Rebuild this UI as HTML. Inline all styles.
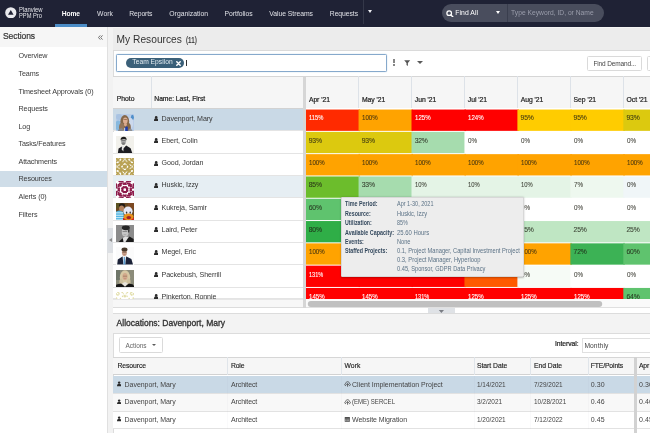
<!DOCTYPE html>
<html><head><meta charset="utf-8"><title>My Resources</title>
<style>
html,body{margin:0;padding:0;}
body{width:650px;height:433px;overflow:hidden;position:relative;background:#fff;font-family:"Liberation Sans",sans-serif;color:#333;}
.a{position:absolute;white-space:nowrap;}
.t{position:absolute;white-space:nowrap;line-height:10px;}
</style></head><body>
<div id="app" style="position:absolute;left:0;top:0;width:650px;height:433px;overflow:hidden;will-change:transform">

<div class="a" style="left:0.00px;top:0.00px;width:650.00px;height:26.80px;background:#1f2235;"></div>
<svg class="a" style="left:5px;top:6.7px" width="11.6" height="11.6" viewBox="0 0 11.6 11.6"><circle cx="5.8" cy="5.8" r="5.6" fill="#e9eaee"/><path d="M5.8 3 L8.6 7.8 L3 7.8 Z" fill="#1f2235"/></svg>
<div class="t" style="left:19.0px;top:5.00px;font-size:6.4px;color:#e4e5ea;transform:scaleX(0.921);transform-origin:0 0;">Planview</div>
<div class="t" style="left:19.0px;top:11.00px;font-size:6.4px;color:#e4e5ea;transform:scaleX(0.898);transform-origin:0 0;">PPM Pro</div>
<div class="t" style="left:61.8px;top:9.00px;font-size:6.7px;color:#fff;font-weight:bold;letter-spacing:-0.104px;">Home</div>
<div class="a" style="left:54.80px;top:24.20px;width:32.30px;height:2.60px;background:#4b8cc6;"></div>
<div class="t" style="left:97.1px;top:9.00px;font-size:6.8px;color:#dfe0e6;letter-spacing:-0.010px;">Work</div>
<div class="t" style="left:129.3px;top:9.00px;font-size:6.8px;color:#dfe0e6;letter-spacing:-0.116px;">Reports</div>
<div class="t" style="left:169.3px;top:9.00px;font-size:6.8px;color:#dfe0e6;letter-spacing:0.020px;">Organization</div>
<div class="t" style="left:224.6px;top:9.00px;font-size:6.8px;color:#dfe0e6;letter-spacing:-0.025px;">Portfolios</div>
<div class="t" style="left:269.2px;top:9.00px;font-size:6.8px;color:#dfe0e6;letter-spacing:-0.023px;">Value Streams</div>
<div class="t" style="left:329.8px;top:9.00px;font-size:6.8px;color:#dfe0e6;letter-spacing:-0.066px;">Requests</div>
<div class="a" style="left:362.60px;top:0.00px;width:0.80px;height:24.00px;background:#343849;"></div>
<div class="a" style="left:367.70px;top:10.40px;width:0;height:0;border-left:2.75px solid transparent;border-right:2.75px solid transparent;border-top:3.20px solid #eeeff3"></div>
<div class="a" style="left:442.10px;top:3.60px;width:162.20px;height:18.20px;background:#494d5d;border-radius:9.1px"></div>
<div class="a" style="left:507.10px;top:3.60px;width:0.80px;height:18.20px;background:#3a3e4e;"></div>
<svg class="a" style="left:446.2px;top:9.5px" width="7.7" height="7.7" viewBox="0 0 7 7"><circle cx="2.9" cy="2.9" r="2.1" fill="none" stroke="#fff" stroke-width="1.15"/><path d="M4.5 4.5 L6.3 6.3" stroke="#fff" stroke-width="1.3" stroke-linecap="round"/></svg>
<div class="t" style="left:455.3px;top:8.00px;font-size:6.8px;color:#fff;letter-spacing:0.063px;">Find All</div>
<div class="a" style="left:495.60px;top:10.60px;width:0;height:0;border-left:2.90px solid transparent;border-right:2.90px solid transparent;border-top:3.20px solid #fff"></div>
<div class="t" style="left:511.1px;top:8.00px;font-size:6.7px;color:#9a9dab;letter-spacing:0.016px;">Type Keyword, ID, or Name</div>
<div class="a" style="left:0.00px;top:26.80px;width:107.40px;height:20.40px;background:#f6f6f6;"></div>
<div class="t" style="left:3.0px;top:31.00px;font-size:8.5px;color:#333;letter-spacing:-0.075px;-webkit-text-stroke:0.2px #333;">Sections</div>
<svg class="a" style="left:97.6px;top:34.5px" width="5" height="5" viewBox="0 0 5 5"><path d="M2.3 0.4 L0.5 2.5 L2.3 4.6 M4.5 0.4 L2.7 2.5 L4.5 4.6" stroke="#6a6a6a" stroke-width="0.95" fill="none"/></svg>
<div class="a" style="left:0.00px;top:170.60px;width:107.50px;height:16.60px;background:#cfdde8;"></div>
<div class="t" style="left:18.5px;top:51.00px;font-size:7.2px;color:#3a3a3a;letter-spacing:-0.131px;">Overview</div>
<div class="t" style="left:18.5px;top:69.00px;font-size:7.2px;color:#3a3a3a;letter-spacing:-0.148px;">Teams</div>
<div class="t" style="left:18.5px;top:87.00px;font-size:7.2px;color:#3a3a3a;letter-spacing:-0.118px;">Timesheet Approvals (0)</div>
<div class="t" style="left:18.5px;top:104.00px;font-size:7.2px;color:#3a3a3a;letter-spacing:-0.133px;">Requests</div>
<div class="t" style="left:18.5px;top:122.00px;font-size:7.2px;color:#3a3a3a;letter-spacing:-0.140px;">Log</div>
<div class="t" style="left:18.5px;top:139.00px;font-size:7.2px;color:#3a3a3a;letter-spacing:-0.122px;">Tasks/Features</div>
<div class="t" style="left:18.5px;top:157.00px;font-size:7.2px;color:#3a3a3a;letter-spacing:-0.127px;">Attachments</div>
<div class="t" style="left:18.5px;top:174.00px;font-size:7.2px;color:#3a3a3a;letter-spacing:-0.134px;">Resources</div>
<div class="t" style="left:18.5px;top:192.00px;font-size:7.2px;color:#3a3a3a;letter-spacing:-0.102px;">Alerts (0)</div>
<div class="t" style="left:18.5px;top:210.00px;font-size:7.2px;color:#3a3a3a;letter-spacing:-0.098px;">Filters</div>
<div class="a" style="left:107.40px;top:26.80px;width:5.80px;height:407.00px;background:#f2f2f2;"></div>
<div class="a" style="left:107.20px;top:26.80px;width:0.60px;height:407.00px;background:#e0e0e0;"></div>
<div class="a" style="left:113.00px;top:26.80px;width:0.60px;height:407.00px;background:#dcdcdc;"></div>
<div class="a" style="left:107.40px;top:227.70px;width:5.90px;height:25.00px;background:#dcdfe3;"></div>
<div class="a" style="left:108.8px;top:237.5px;width:0;height:0;border-top:2.9px solid transparent;border-bottom:2.9px solid transparent;border-right:3px solid #8c8c8c"></div>
<div class="a" style="left:113.20px;top:26.80px;width:537.00px;height:23.60px;background:#ececec;"></div>
<div class="a" style="left:113.20px;top:26.80px;width:537.00px;height:1.20px;background:#f4f4f4;"></div>
<div class="t" style="left:116.6px;top:35.00px;font-size:10.2px;color:#333;letter-spacing:0.018px;">My Resources</div>
<div class="t" style="left:185.7px;top:36.00px;font-size:8.2px;color:#333;transform:scaleX(0.773);transform-origin:0 0;-webkit-text-stroke:0.2px #333;">(11)</div>
<div class="a" style="left:113.20px;top:50.20px;width:537.00px;height:0.70px;background:#dadada;"></div>
<div class="a" style="left:115.5px;top:54.3px;width:271px;height:17.3px;border:0.9px solid #86a9cc;border-radius:1.5px;box-sizing:border-box;background:#fff;box-shadow:0 0 1.2px #a9c3dc"></div>
<div class="a" style="left:126.20px;top:57.80px;width:58.00px;height:10.00px;background:#3b6079;border-radius:5px"></div>
<div class="t" style="left:132.3px;top:57.00px;font-size:6.7px;color:#e3ebf0;letter-spacing:0.023px;">Team Epsilon</div>
<svg class="a" style="left:175.8px;top:60.7px" width="5" height="5" viewBox="0 0 5 5"><path d="M0.8 0.8 L4.2 4.2 M4.2 0.8 L0.8 4.2" stroke="#fff" stroke-width="1.5" stroke-linecap="round"/></svg>
<div class="a" style="left:186.00px;top:60.00px;width:0.70px;height:6.40px;background:#333;"></div>
<div class="a" style="left:392.50px;top:58.70px;width:2.00px;height:2.10px;background:#5e5e5e;border-radius:1px"></div>
<div class="a" style="left:392.50px;top:61.20px;width:2.00px;height:2.10px;background:#5e5e5e;border-radius:1px"></div>
<div class="a" style="left:392.50px;top:63.70px;width:2.00px;height:2.10px;background:#5e5e5e;border-radius:1px"></div>
<svg class="a" style="left:404.4px;top:60px" width="6.4" height="6" viewBox="0 0 6.4 6"><path d="M0.2 0.3 H6.2 L3.9 2.9 V5.9 L2.5 5 V2.9 Z" fill="#555"/></svg>
<div class="a" style="left:416.50px;top:61.00px;width:0;height:0;border-left:3.00px solid transparent;border-right:3.00px solid transparent;border-top:3.30px solid #5a5a5a"></div>
<div class="a" style="left:587.3px;top:55.6px;width:54.4px;height:15px;border:0.7px solid #dadada;border-radius:1.5px;box-sizing:border-box;background:#fff"></div>
<div class="t" style="left:593.4px;top:59.00px;font-size:6.5px;color:#444;letter-spacing:-0.131px;">Find Demand...</div>
<div class="a" style="left:647.4px;top:55.6px;width:10px;height:15px;border:0.7px solid #dadada;border-radius:1.5px;box-sizing:border-box;background:#fff"></div>
<div class="a" style="left:113.20px;top:75.80px;width:537.00px;height:32.90px;background:#f6f6f6;border-top:0.7px solid #d6d6d6;border-bottom:0.7px solid #d2d2d2;box-sizing:border-box"></div>
<div class="a" style="left:151.40px;top:76.30px;width:0.70px;height:32.00px;background:#dde2e8;"></div>
<div class="t" style="left:116.8px;top:94.00px;font-size:6.8px;color:#222;letter-spacing:-0.034px;-webkit-text-stroke:0.2px #222;">Photo</div>
<div class="t" style="left:154.3px;top:94.00px;font-size:6.8px;color:#222;letter-spacing:-0.057px;-webkit-text-stroke:0.2px #222;">Name: Last, First</div>
<div class="t" style="left:308.9px;top:95.00px;font-size:6.8px;color:#222;letter-spacing:-0.046px;-webkit-text-stroke:0.2px #222;">Apr &#39;21</div>
<div class="t" style="left:361.9px;top:95.00px;font-size:6.8px;color:#222;letter-spacing:-0.051px;-webkit-text-stroke:0.2px #222;">May &#39;21</div>
<div class="a" style="left:358.15px;top:76.30px;width:0.70px;height:32.00px;background:#dde2e8;"></div>
<div class="t" style="left:414.8px;top:95.00px;font-size:6.8px;color:#222;letter-spacing:-0.047px;-webkit-text-stroke:0.2px #222;">Jun &#39;21</div>
<div class="a" style="left:411.10px;top:76.30px;width:0.70px;height:32.00px;background:#dde2e8;"></div>
<div class="t" style="left:467.8px;top:95.00px;font-size:6.8px;color:#222;letter-spacing:-0.042px;-webkit-text-stroke:0.2px #222;">Jul &#39;21</div>
<div class="a" style="left:464.05px;top:76.30px;width:0.70px;height:32.00px;background:#dde2e8;"></div>
<div class="t" style="left:520.7px;top:95.00px;font-size:6.8px;color:#222;letter-spacing:-0.049px;-webkit-text-stroke:0.2px #222;">Aug &#39;21</div>
<div class="a" style="left:517.00px;top:76.30px;width:0.70px;height:32.00px;background:#dde2e8;"></div>
<div class="t" style="left:573.6px;top:95.00px;font-size:6.8px;color:#222;letter-spacing:-0.049px;-webkit-text-stroke:0.2px #222;">Sep &#39;21</div>
<div class="a" style="left:569.95px;top:76.30px;width:0.70px;height:32.00px;background:#dde2e8;"></div>
<div class="t" style="left:626.6px;top:95.00px;font-size:6.8px;color:#222;letter-spacing:-0.046px;-webkit-text-stroke:0.2px #222;">Oct &#39;21</div>
<div class="a" style="left:622.90px;top:76.30px;width:0.70px;height:32.00px;background:#dde2e8;"></div>
<div class="a" style="left:113.20px;top:109.20px;width:190.20px;height:22.30px;background:#c9d9e6;border-bottom:0.6px solid #e4e4e4;box-sizing:border-box"></div>
<svg class="a" style="left:154px;top:115.9px" width="4.4" height="5" viewBox="0 0 9 10"><circle cx="4.5" cy="2.7" r="2.7" fill="#2b2b2b"/><path d="M0 10 C0 5.6 1.6 4.6 4.5 4.6 C7.4 4.6 9 5.6 9 10 Z" fill="#2b2b2b"/></svg>
<div class="t" style="left:161.6px;top:114.00px;font-size:7.1px;color:#383838;letter-spacing:-0.105px;">Davenport, Mary</div>
<div class="a" style="left:113.20px;top:131.50px;width:190.20px;height:22.30px;background:#fff;border-bottom:0.6px solid #e4e4e4;box-sizing:border-box"></div>
<svg class="a" style="left:154px;top:138.2px" width="4.4" height="5" viewBox="0 0 9 10"><circle cx="4.5" cy="2.7" r="2.7" fill="#2b2b2b"/><path d="M0 10 C0 5.6 1.6 4.6 4.5 4.6 C7.4 4.6 9 5.6 9 10 Z" fill="#2b2b2b"/></svg>
<div class="t" style="left:161.6px;top:136.00px;font-size:7.1px;color:#383838;letter-spacing:-0.093px;">Ebert, Colin</div>
<div class="a" style="left:113.20px;top:153.80px;width:190.20px;height:22.30px;background:#fff;border-bottom:0.6px solid #e4e4e4;box-sizing:border-box"></div>
<svg class="a" style="left:154px;top:160.5px" width="4.4" height="5" viewBox="0 0 9 10"><circle cx="4.5" cy="2.7" r="2.7" fill="#2b2b2b"/><path d="M0 10 C0 5.6 1.6 4.6 4.5 4.6 C7.4 4.6 9 5.6 9 10 Z" fill="#2b2b2b"/></svg>
<div class="t" style="left:161.6px;top:158.00px;font-size:7.1px;color:#383838;letter-spacing:-0.108px;">Good, Jordan</div>
<div class="a" style="left:113.20px;top:176.10px;width:190.20px;height:22.30px;background:#e6eef3;border-bottom:0.6px solid #e4e4e4;box-sizing:border-box"></div>
<svg class="a" style="left:154px;top:182.8px" width="4.4" height="5" viewBox="0 0 9 10"><circle cx="4.5" cy="2.7" r="2.7" fill="#2b2b2b"/><path d="M0 10 C0 5.6 1.6 4.6 4.5 4.6 C7.4 4.6 9 5.6 9 10 Z" fill="#2b2b2b"/></svg>
<div class="t" style="left:161.6px;top:180.00px;font-size:7.1px;color:#383838;letter-spacing:-0.095px;">Huskic, Izzy</div>
<div class="a" style="left:113.20px;top:198.40px;width:190.20px;height:22.30px;background:#fff;border-bottom:0.6px solid #e4e4e4;box-sizing:border-box"></div>
<svg class="a" style="left:154px;top:205.1px" width="4.4" height="5" viewBox="0 0 9 10"><circle cx="4.5" cy="2.7" r="2.7" fill="#2b2b2b"/><path d="M0 10 C0 5.6 1.6 4.6 4.5 4.6 C7.4 4.6 9 5.6 9 10 Z" fill="#2b2b2b"/></svg>
<div class="t" style="left:161.6px;top:203.00px;font-size:7.1px;color:#383838;letter-spacing:-0.100px;">Kukreja, Samir</div>
<div class="a" style="left:113.20px;top:220.70px;width:190.20px;height:22.30px;background:#fff;border-bottom:0.6px solid #e4e4e4;box-sizing:border-box"></div>
<svg class="a" style="left:154px;top:227.4px" width="4.4" height="5" viewBox="0 0 9 10"><circle cx="4.5" cy="2.7" r="2.7" fill="#2b2b2b"/><path d="M0 10 C0 5.6 1.6 4.6 4.5 4.6 C7.4 4.6 9 5.6 9 10 Z" fill="#2b2b2b"/></svg>
<div class="t" style="left:161.6px;top:225.00px;font-size:7.1px;color:#383838;letter-spacing:-0.092px;">Laird, Peter</div>
<div class="a" style="left:113.20px;top:243.00px;width:190.20px;height:22.30px;background:#fff;border-bottom:0.6px solid #e4e4e4;box-sizing:border-box"></div>
<svg class="a" style="left:154px;top:249.7px" width="4.4" height="5" viewBox="0 0 9 10"><circle cx="4.5" cy="2.7" r="2.7" fill="#2b2b2b"/><path d="M0 10 C0 5.6 1.6 4.6 4.5 4.6 C7.4 4.6 9 5.6 9 10 Z" fill="#2b2b2b"/></svg>
<div class="t" style="left:161.6px;top:247.00px;font-size:7.1px;color:#383838;letter-spacing:-0.097px;">Megel, Eric</div>
<div class="a" style="left:113.20px;top:265.30px;width:190.20px;height:22.30px;background:#fff;border-bottom:0.6px solid #e4e4e4;box-sizing:border-box"></div>
<svg class="a" style="left:154px;top:272.0px" width="4.4" height="5" viewBox="0 0 9 10"><circle cx="4.5" cy="2.7" r="2.7" fill="#2b2b2b"/><path d="M0 10 C0 5.6 1.6 4.6 4.5 4.6 C7.4 4.6 9 5.6 9 10 Z" fill="#2b2b2b"/></svg>
<div class="t" style="left:161.6px;top:270.00px;font-size:7.1px;color:#383838;letter-spacing:-0.097px;">Packebush, Sherrill</div>
<div class="a" style="left:113.20px;top:287.60px;width:190.20px;height:11.20px;background:#fff;border-bottom:0.6px solid #e4e4e4;box-sizing:border-box"></div>
<svg class="a" style="left:154px;top:294.3px" width="4.4" height="5" viewBox="0 0 9 10"><circle cx="4.5" cy="2.7" r="2.7" fill="#2b2b2b"/><path d="M0 10 C0 5.6 1.6 4.6 4.5 4.6 C7.4 4.6 9 5.6 9 10 Z" fill="#2b2b2b"/></svg>
<div class="t" style="left:161.6px;top:292.00px;font-size:7.1px;color:#383838;letter-spacing:-0.100px;">Pinkerton, Ronnie</div>
<svg class="a" style="left:116.3px;top:113.6px" width="17.6" height="17.3" viewBox="0 0 17.6 17.3"><defs><filter id="p1" x="-20%" y="-20%" width="140%" height="140%"><feGaussianBlur stdDeviation="0.7"/></filter></defs><g filter="url(#p1)"><rect x="-2" y="-2" width="22" height="22" fill="#b9cde8"/><ellipse cx="2.2" cy="11.5" rx="2.8" ry="5" fill="#86b8de"/><ellipse cx="16.4" cy="3.4" rx="1.5" ry="2.6" fill="#4f8fca"/><ellipse cx="14.6" cy="9" rx="2.6" ry="5" fill="#ccd9ec"/><ellipse cx="3" cy="3" rx="3" ry="3" fill="#a9c3e2"/><ellipse cx="8.8" cy="7.5" rx="4.4" ry="6.5" fill="#85674a"/><ellipse cx="5.6" cy="13.5" rx="2.6" ry="4.5" fill="#94765a"/><ellipse cx="12.4" cy="13.5" rx="2.4" ry="4.5" fill="#85674a"/><ellipse cx="9.3" cy="6.6" rx="2.3" ry="3.2" fill="#dcae92"/><ellipse cx="9.3" cy="5.6" rx="2.2" ry="0.5" fill="#9a7458"/><path d="M1.5 17.6 L3 15 L6 14 L8 17.6 Z" fill="#86888c"/><path d="M12 17.6 L13 14.4 L16 15.4 L16.6 17.6 Z" fill="#8e9094"/><rect x="9.2" y="12.6" width="2.6" height="5.2" fill="#1c3ba8"/><ellipse cx="9.4" cy="10.6" rx="1.5" ry="1.8" fill="#d8a88a"/></g></svg>
<svg class="a" style="left:116.3px;top:135.9px" width="17.6" height="17.3" viewBox="0 0 17.6 17.3"><defs><filter id="p2" x="-20%" y="-20%" width="140%" height="140%"><feGaussianBlur stdDeviation="0.7"/></filter></defs><g filter="url(#p2)"><rect x="-2" y="-2" width="22" height="22" fill="#f2f1ec"/><ellipse cx="7.5" cy="5.2" rx="2.6" ry="3.5" fill="#b0b0b0"/><path d="M4.6 4.4 C4.4 1.6 6 0.8 7.8 0.8 C9.8 0.8 10.9 2 10.5 4.6 C9.8 3.4 8.6 3 7.4 3.1 C6.2 3.2 5.2 3.6 4.6 4.4 Z" fill="#1c1c1c"/><rect x="5.4" y="4.4" width="4.2" height="0.7" fill="#5a5a5a"/><ellipse cx="7.4" cy="7.6" rx="1.7" ry="1.3" fill="#7c7c7c"/><path d="M1.8 17.6 L2.6 12.6 L6 10.4 L7.4 12.4 L10.2 9.6 L14.6 12.2 L16.4 17.6 Z" fill="#1a1a20"/><path d="M5.9 10.6 L7.7 9.6 L7.4 15.6 L5.8 13.6 Z" fill="#e4e4e4"/></g></svg>
<svg class="a" style="left:116.3px;top:158.2px" width="17.6" height="17.3" viewBox="0 0 17.6 17.3"><defs><filter id="p3" x="-20%" y="-20%" width="140%" height="140%"><feGaussianBlur stdDeviation="0.45"/></filter></defs><g filter="url(#p3)"><rect x="-2" y="-2" width="22" height="22" fill="#b9a254"/><circle cx="13.86" cy="6.47" r="0.48" fill="#ffffff"/><circle cx="6.59" cy="3.67" r="0.48" fill="#ffffff"/><circle cx="11.01" cy="13.63" r="0.48" fill="#ffffff"/><circle cx="3.74" cy="10.83" r="0.48" fill="#ffffff"/><circle cx="13.86" cy="10.83" r="0.48" fill="#ffffff"/><circle cx="11.01" cy="3.67" r="0.48" fill="#ffffff"/><circle cx="6.59" cy="13.63" r="0.48" fill="#ffffff"/><circle cx="3.74" cy="6.47" r="0.48" fill="#ffffff"/><circle cx="3.18" cy="2.93" r="0.37" fill="#ffffff"/><circle cx="3.18" cy="14.37" r="0.37" fill="#ffffff"/><circle cx="14.42" cy="2.93" r="0.37" fill="#ffffff"/><circle cx="14.62" cy="14.17" r="0.37" fill="#ffffff"/><circle cx="14.42" cy="14.37" r="0.37" fill="#ffffff"/><circle cx="14.62" cy="3.13" r="0.37" fill="#ffffff"/><circle cx="2.98" cy="14.17" r="0.37" fill="#ffffff"/><circle cx="2.98" cy="3.13" r="0.37" fill="#ffffff"/><circle cx="8.68" cy="0.99" r="0.44" fill="#ffffff"/><circle cx="16.59" cy="8.77" r="0.44" fill="#ffffff"/><circle cx="1.01" cy="8.77" r="0.44" fill="#ffffff"/><circle cx="8.92" cy="16.31" r="0.44" fill="#ffffff"/><circle cx="8.68" cy="16.31" r="0.44" fill="#ffffff"/><circle cx="8.92" cy="0.99" r="0.44" fill="#ffffff"/><circle cx="16.59" cy="8.53" r="0.44" fill="#ffffff"/><circle cx="1.01" cy="8.53" r="0.44" fill="#ffffff"/><circle cx="-0.46" cy="10.79" r="0.51" fill="#ffffff"/><circle cx="10.98" cy="-0.45" r="0.51" fill="#ffffff"/><circle cx="10.98" cy="17.75" r="0.51" fill="#ffffff"/><circle cx="6.62" cy="17.75" r="0.51" fill="#ffffff"/><circle cx="6.62" cy="-0.45" r="0.51" fill="#ffffff"/><circle cx="18.06" cy="6.51" r="0.51" fill="#ffffff"/><circle cx="-0.46" cy="6.51" r="0.51" fill="#ffffff"/><circle cx="18.06" cy="10.79" r="0.51" fill="#ffffff"/><circle cx="16.58" cy="4.3" r="0.57" fill="#ffffff"/><circle cx="16.58" cy="13.0" r="0.57" fill="#ffffff"/><circle cx="13.23" cy="16.3" r="0.57" fill="#ffffff"/><circle cx="4.37" cy="1.0" r="0.57" fill="#ffffff"/><circle cx="13.23" cy="1.0" r="0.57" fill="#ffffff"/><circle cx="4.37" cy="16.3" r="0.57" fill="#ffffff"/><circle cx="1.02" cy="4.3" r="0.57" fill="#ffffff"/><circle cx="1.02" cy="13.0" r="0.57" fill="#ffffff"/><circle cx="7.4" cy="14.45" r="0.65" fill="#ffffff"/><circle cx="14.7" cy="10.03" r="0.65" fill="#ffffff"/><circle cx="14.7" cy="7.27" r="0.65" fill="#ffffff"/><circle cx="2.9" cy="10.03" r="0.65" fill="#ffffff"/><circle cx="2.9" cy="7.27" r="0.65" fill="#ffffff"/><circle cx="10.2" cy="14.45" r="0.65" fill="#ffffff"/><circle cx="7.4" cy="2.85" r="0.65" fill="#ffffff"/><circle cx="10.2" cy="2.85" r="0.65" fill="#ffffff"/><circle cx="3.93" cy="15.43" r="0.58" fill="#ffffff"/><circle cx="1.91" cy="13.43" r="0.58" fill="#ffffff"/><circle cx="15.69" cy="3.87" r="0.58" fill="#ffffff"/><circle cx="1.91" cy="3.87" r="0.58" fill="#ffffff"/><circle cx="13.67" cy="15.43" r="0.58" fill="#ffffff"/><circle cx="3.93" cy="1.87" r="0.58" fill="#ffffff"/><circle cx="13.67" cy="1.87" r="0.58" fill="#ffffff"/><circle cx="15.69" cy="13.43" r="0.58" fill="#ffffff"/><circle cx="9.4" cy="1.72" r="0.56" fill="#ffffff"/><circle cx="8.2" cy="15.58" r="0.56" fill="#ffffff"/><circle cx="15.85" cy="8.06" r="0.56" fill="#ffffff"/><circle cx="1.75" cy="8.06" r="0.56" fill="#ffffff"/><circle cx="15.85" cy="9.24" r="0.56" fill="#ffffff"/><circle cx="1.75" cy="9.24" r="0.56" fill="#ffffff"/><circle cx="8.2" cy="1.72" r="0.56" fill="#ffffff"/><circle cx="9.4" cy="15.58" r="0.56" fill="#ffffff"/><circle cx="6.0" cy="8.37" r="0.65" fill="#ffffff"/><circle cx="11.6" cy="8.93" r="0.65" fill="#ffffff"/><circle cx="9.09" cy="5.9" r="0.65" fill="#ffffff"/><circle cx="9.09" cy="11.4" r="0.65" fill="#ffffff"/><circle cx="8.51" cy="5.9" r="0.65" fill="#ffffff"/><circle cx="11.6" cy="8.37" r="0.65" fill="#ffffff"/><circle cx="6.0" cy="8.93" r="0.65" fill="#ffffff"/><circle cx="8.51" cy="11.4" r="0.65" fill="#ffffff"/><circle cx="13.2" cy="15.22" r="0.66" fill="#ffffff"/><circle cx="13.2" cy="2.08" r="0.66" fill="#ffffff"/><circle cx="15.49" cy="12.97" r="0.66" fill="#ffffff"/><circle cx="2.11" cy="4.33" r="0.66" fill="#ffffff"/><circle cx="15.49" cy="4.33" r="0.66" fill="#ffffff"/><circle cx="4.4" cy="15.22" r="0.66" fill="#ffffff"/><circle cx="4.4" cy="2.08" r="0.66" fill="#ffffff"/><circle cx="2.11" cy="12.97" r="0.66" fill="#ffffff"/><circle cx="2.16" cy="0.23" r="0.49" fill="#ffffff"/><circle cx="15.44" cy="0.23" r="0.49" fill="#ffffff"/><circle cx="0.23" cy="15.18" r="0.49" fill="#ffffff"/><circle cx="2.16" cy="17.07" r="0.49" fill="#ffffff"/><circle cx="17.37" cy="15.18" r="0.49" fill="#ffffff"/><circle cx="15.44" cy="17.07" r="0.49" fill="#ffffff"/><circle cx="0.23" cy="2.12" r="0.49" fill="#ffffff"/><circle cx="17.37" cy="2.12" r="0.49" fill="#ffffff"/><circle cx="16.25" cy="12.71" r="0.68" fill="#ffffff"/><circle cx="16.25" cy="4.59" r="0.68" fill="#ffffff"/><circle cx="4.67" cy="15.97" r="0.68" fill="#ffffff"/><circle cx="1.35" cy="4.59" r="0.68" fill="#ffffff"/><circle cx="12.93" cy="15.97" r="0.68" fill="#ffffff"/><circle cx="1.35" cy="12.71" r="0.68" fill="#ffffff"/><circle cx="12.93" cy="1.33" r="0.68" fill="#ffffff"/><circle cx="4.67" cy="1.33" r="0.68" fill="#ffffff"/><circle cx="0.63" cy="9.54" r="0.4" fill="#ffffff"/><circle cx="7.89" cy="16.68" r="0.4" fill="#ffffff"/><circle cx="0.63" cy="7.76" r="0.4" fill="#ffffff"/><circle cx="7.89" cy="0.62" r="0.4" fill="#ffffff"/><circle cx="9.71" cy="0.62" r="0.4" fill="#ffffff"/><circle cx="16.97" cy="9.54" r="0.4" fill="#ffffff"/><circle cx="9.71" cy="16.68" r="0.4" fill="#ffffff"/><circle cx="16.97" cy="7.76" r="0.4" fill="#ffffff"/><circle cx="8.8" cy="8.65" r="2.6" fill="none" stroke="#fff" stroke-width="0.9" stroke-dasharray="1.6 0.9"/></g></svg>
<svg class="a" style="left:116.3px;top:180.5px" width="17.6" height="17.3" viewBox="0 0 17.6 17.3"><defs><filter id="p4" x="-20%" y="-20%" width="140%" height="140%"><feGaussianBlur stdDeviation="0.45"/></filter></defs><g filter="url(#p4)"><rect x="-2" y="-2" width="22" height="22" fill="#ffffff"/><circle cx="6.69" cy="-0.15" r="0.78" fill="#8c1a4a"/><circle cx="10.91" cy="-0.15" r="0.78" fill="#8c1a4a"/><circle cx="17.75" cy="10.72" r="0.78" fill="#8c1a4a"/><circle cx="-0.15" cy="6.58" r="0.78" fill="#8c1a4a"/><circle cx="-0.15" cy="10.72" r="0.78" fill="#8c1a4a"/><circle cx="17.75" cy="6.58" r="0.78" fill="#8c1a4a"/><circle cx="6.69" cy="17.45" r="0.78" fill="#8c1a4a"/><circle cx="10.91" cy="17.45" r="0.78" fill="#8c1a4a"/><circle cx="15.35" cy="9.43" r="0.85" fill="#8c1a4a"/><circle cx="9.59" cy="15.09" r="0.85" fill="#8c1a4a"/><circle cx="8.01" cy="2.21" r="0.85" fill="#8c1a4a"/><circle cx="2.25" cy="7.87" r="0.85" fill="#8c1a4a"/><circle cx="2.25" cy="9.43" r="0.85" fill="#8c1a4a"/><circle cx="9.59" cy="2.21" r="0.85" fill="#8c1a4a"/><circle cx="8.01" cy="15.09" r="0.85" fill="#8c1a4a"/><circle cx="15.35" cy="7.87" r="0.85" fill="#8c1a4a"/><circle cx="18.09" cy="6.74" r="1.09" fill="#8c1a4a"/><circle cx="6.85" cy="17.78" r="1.09" fill="#8c1a4a"/><circle cx="10.75" cy="-0.48" r="1.09" fill="#8c1a4a"/><circle cx="18.09" cy="10.56" r="1.09" fill="#8c1a4a"/><circle cx="6.85" cy="-0.48" r="1.09" fill="#8c1a4a"/><circle cx="-0.49" cy="6.74" r="1.09" fill="#8c1a4a"/><circle cx="10.75" cy="17.78" r="1.09" fill="#8c1a4a"/><circle cx="-0.49" cy="10.56" r="1.09" fill="#8c1a4a"/><circle cx="13.01" cy="12.85" r="1.0" fill="#8c1a4a"/><circle cx="4.53" cy="4.51" r="1.0" fill="#8c1a4a"/><circle cx="13.07" cy="4.51" r="1.0" fill="#8c1a4a"/><circle cx="4.53" cy="12.79" r="1.0" fill="#8c1a4a"/><circle cx="4.59" cy="4.45" r="1.0" fill="#8c1a4a"/><circle cx="13.07" cy="12.79" r="1.0" fill="#8c1a4a"/><circle cx="13.01" cy="4.45" r="1.0" fill="#8c1a4a"/><circle cx="4.59" cy="12.85" r="1.0" fill="#8c1a4a"/><circle cx="7.01" cy="1.06" r="0.75" fill="#8c1a4a"/><circle cx="1.08" cy="6.89" r="0.75" fill="#8c1a4a"/><circle cx="16.52" cy="6.89" r="0.75" fill="#8c1a4a"/><circle cx="10.59" cy="1.06" r="0.75" fill="#8c1a4a"/><circle cx="1.08" cy="10.41" r="0.75" fill="#8c1a4a"/><circle cx="16.52" cy="10.41" r="0.75" fill="#8c1a4a"/><circle cx="7.01" cy="16.24" r="0.75" fill="#8c1a4a"/><circle cx="10.59" cy="16.24" r="0.75" fill="#8c1a4a"/><circle cx="8.99" cy="6.51" r="0.86" fill="#8c1a4a"/><circle cx="8.61" cy="6.51" r="0.86" fill="#8c1a4a"/><circle cx="10.98" cy="8.83" r="0.86" fill="#8c1a4a"/><circle cx="8.99" cy="10.79" r="0.86" fill="#8c1a4a"/><circle cx="10.98" cy="8.47" r="0.86" fill="#8c1a4a"/><circle cx="8.61" cy="10.79" r="0.86" fill="#8c1a4a"/><circle cx="6.62" cy="8.47" r="0.86" fill="#8c1a4a"/><circle cx="6.62" cy="8.83" r="0.86" fill="#8c1a4a"/><circle cx="12.59" cy="0.4" r="0.93" fill="#8c1a4a"/><circle cx="17.19" cy="4.92" r="0.93" fill="#8c1a4a"/><circle cx="5.01" cy="0.4" r="0.93" fill="#8c1a4a"/><circle cx="0.41" cy="4.92" r="0.93" fill="#8c1a4a"/><circle cx="17.19" cy="12.38" r="0.93" fill="#8c1a4a"/><circle cx="0.41" cy="12.38" r="0.93" fill="#8c1a4a"/><circle cx="5.01" cy="16.9" r="0.93" fill="#8c1a4a"/><circle cx="12.59" cy="16.9" r="0.93" fill="#8c1a4a"/><circle cx="11.2" cy="9.69" r="1.29" fill="#8c1a4a"/><circle cx="11.2" cy="7.61" r="1.29" fill="#8c1a4a"/><circle cx="6.4" cy="7.61" r="1.29" fill="#8c1a4a"/><circle cx="9.86" cy="11.01" r="1.29" fill="#8c1a4a"/><circle cx="7.74" cy="6.29" r="1.29" fill="#8c1a4a"/><circle cx="6.4" cy="9.69" r="1.29" fill="#8c1a4a"/><circle cx="9.86" cy="6.29" r="1.29" fill="#8c1a4a"/><circle cx="7.74" cy="11.01" r="1.29" fill="#8c1a4a"/><circle cx="14.57" cy="8.07" r="0.93" fill="#8c1a4a"/><circle cx="8.21" cy="14.32" r="0.93" fill="#8c1a4a"/><circle cx="8.21" cy="2.98" r="0.93" fill="#8c1a4a"/><circle cx="3.03" cy="9.23" r="0.93" fill="#8c1a4a"/><circle cx="9.39" cy="14.32" r="0.93" fill="#8c1a4a"/><circle cx="9.39" cy="2.98" r="0.93" fill="#8c1a4a"/><circle cx="14.57" cy="9.23" r="0.93" fill="#8c1a4a"/><circle cx="3.03" cy="8.07" r="0.93" fill="#8c1a4a"/><circle cx="2.65" cy="11.74" r="1.11" fill="#8c1a4a"/><circle cx="11.95" cy="14.69" r="1.11" fill="#8c1a4a"/><circle cx="5.65" cy="2.61" r="1.11" fill="#8c1a4a"/><circle cx="14.95" cy="11.74" r="1.11" fill="#8c1a4a"/><circle cx="5.65" cy="14.69" r="1.11" fill="#8c1a4a"/><circle cx="2.65" cy="5.56" r="1.11" fill="#8c1a4a"/><circle cx="14.95" cy="5.56" r="1.11" fill="#8c1a4a"/><circle cx="11.95" cy="2.61" r="1.11" fill="#8c1a4a"/><circle cx="4.17" cy="14.59" r="1.24" fill="#8c1a4a"/><circle cx="13.43" cy="2.71" r="1.24" fill="#8c1a4a"/><circle cx="14.84" cy="4.1" r="1.24" fill="#8c1a4a"/><circle cx="4.17" cy="2.71" r="1.24" fill="#8c1a4a"/><circle cx="2.76" cy="13.2" r="1.24" fill="#8c1a4a"/><circle cx="14.84" cy="13.2" r="1.24" fill="#8c1a4a"/><circle cx="13.43" cy="14.59" r="1.24" fill="#8c1a4a"/><circle cx="2.76" cy="4.1" r="1.24" fill="#8c1a4a"/><circle cx="7.48" cy="13.97" r="0.74" fill="#8c1a4a"/><circle cx="14.21" cy="9.95" r="0.74" fill="#8c1a4a"/><circle cx="3.39" cy="7.35" r="0.74" fill="#8c1a4a"/><circle cx="3.39" cy="9.95" r="0.74" fill="#8c1a4a"/><circle cx="14.21" cy="7.35" r="0.74" fill="#8c1a4a"/><circle cx="10.12" cy="13.97" r="0.74" fill="#8c1a4a"/><circle cx="7.48" cy="3.33" r="0.74" fill="#8c1a4a"/><circle cx="10.12" cy="3.33" r="0.74" fill="#8c1a4a"/><circle cx="4.26" cy="0.0" r="0.82" fill="#8c1a4a"/><circle cx="13.34" cy="17.3" r="0.82" fill="#8c1a4a"/><circle cx="17.6" cy="4.18" r="0.82" fill="#8c1a4a"/><circle cx="0.0" cy="4.18" r="0.82" fill="#8c1a4a"/><circle cx="17.6" cy="13.12" r="0.82" fill="#8c1a4a"/><circle cx="13.34" cy="0.0" r="0.82" fill="#8c1a4a"/><circle cx="4.26" cy="17.3" r="0.82" fill="#8c1a4a"/><circle cx="0.0" cy="13.12" r="0.82" fill="#8c1a4a"/><circle cx="17.6" cy="13.94" r="1.14" fill="#8c1a4a"/><circle cx="17.6" cy="3.36" r="1.14" fill="#8c1a4a"/><circle cx="14.18" cy="17.3" r="1.14" fill="#8c1a4a"/><circle cx="3.42" cy="17.3" r="1.14" fill="#8c1a4a"/><circle cx="0.0" cy="13.94" r="1.14" fill="#8c1a4a"/><circle cx="3.42" cy="0.0" r="1.14" fill="#8c1a4a"/><circle cx="0.0" cy="3.36" r="1.14" fill="#8c1a4a"/><circle cx="14.18" cy="0.0" r="1.14" fill="#8c1a4a"/><circle cx="16.99" cy="6.04" r="0.91" fill="#8c1a4a"/><circle cx="6.14" cy="16.7" r="0.91" fill="#8c1a4a"/><circle cx="16.99" cy="11.26" r="0.91" fill="#8c1a4a"/><circle cx="0.61" cy="6.04" r="0.91" fill="#8c1a4a"/><circle cx="6.14" cy="0.6" r="0.91" fill="#8c1a4a"/><circle cx="0.61" cy="11.26" r="0.91" fill="#8c1a4a"/><circle cx="11.46" cy="0.6" r="0.91" fill="#8c1a4a"/><circle cx="11.46" cy="16.7" r="0.91" fill="#8c1a4a"/><circle cx="8.8" cy="8.65" r="1.2" fill="#fff"/></g></svg>
<svg class="a" style="left:116.3px;top:202.8px" width="17.6" height="17.3" viewBox="0 0 17.6 17.3"><defs><filter id="p5" x="-20%" y="-20%" width="140%" height="140%"><feGaussianBlur stdDeviation="0.7"/></filter></defs><g filter="url(#p5)"><rect x="-2" y="-2" width="22" height="22" fill="#6a4a22"/><rect x="-2" y="-2" width="8" height="7" fill="#5b5224"/><rect x="12" y="-2" width="8" height="8" fill="#7c4a24"/><ellipse cx="6" cy="2.4" rx="3" ry="2.2" fill="#241c18"/><ellipse cx="5.6" cy="5.6" rx="2.5" ry="3.1" fill="#b58462"/><path d="M-1 9 L3 7.4 L7.5 9 L8 18 L-1 18 Z" fill="#55b6e2"/><rect x="-1" y="9.4" width="8" height="0.9" fill="#d8f0fa"/><rect x="-1" y="11.8" width="8.5" height="0.9" fill="#d8f0fa"/><rect x="-1" y="14.2" width="8.5" height="0.9" fill="#d8f0fa"/><rect x="-1" y="16.4" width="8.5" height="0.8" fill="#d8f0fa"/><ellipse cx="12" cy="8.2" rx="4.6" ry="4.6" fill="#e6e8f6"/><ellipse cx="10.6" cy="9.6" rx="0.7" ry="1.2" fill="#333"/><ellipse cx="14.2" cy="9.6" rx="0.7" ry="1.2" fill="#333"/><rect x="7" y="15" width="12" height="3.5" fill="#cf2424"/><ellipse cx="12.6" cy="13.8" rx="5" ry="3.3" fill="#e8921e"/><ellipse cx="12.8" cy="14.6" rx="2.4" ry="1.6" fill="#a0222c"/></g></svg>
<svg class="a" style="left:116.3px;top:225.1px" width="17.6" height="17.3" viewBox="0 0 17.6 17.3"><defs><filter id="p6" x="-20%" y="-20%" width="140%" height="140%"><feGaussianBlur stdDeviation="0.7"/></filter></defs><g filter="url(#p6)"><rect x="-2" y="-2" width="22" height="22" fill="#8c8c8c"/><ellipse cx="9.2" cy="7" rx="3.4" ry="4.6" fill="#c6c6c6"/><ellipse cx="9.8" cy="2.8" rx="4" ry="2.4" fill="#262626"/><ellipse cx="12.7" cy="5.6" rx="0.8" ry="2.2" fill="#3a3a3a"/><rect x="6.6" y="6.3" width="4.6" height="0.7" fill="#6e6e6e"/><rect x="7.6" y="9.6" width="2.6" height="0.5" fill="#8a8a8a"/><path d="M2 17.6 L6.5 13.2 L9 15.5 L13.5 11.6 L17.6 14 L17.6 17.6 Z" fill="#1e1e1e"/><path d="M6.8 13 L9.4 11.4 L12.6 12 L9.2 17.6 L7.6 17.6 Z" fill="#e0e0e0"/></g></svg>
<svg class="a" style="left:116.3px;top:247.4px" width="17.6" height="17.3" viewBox="0 0 17.6 17.3"><defs><filter id="p7" x="-20%" y="-20%" width="140%" height="140%"><feGaussianBlur stdDeviation="0.7"/></filter></defs><g filter="url(#p7)"><rect x="-2" y="-2" width="22" height="22" fill="#fbfbfb"/><ellipse cx="8.4" cy="5.6" rx="2.5" ry="3.6" fill="#c9a089"/><ellipse cx="8.5" cy="2.6" rx="3" ry="2" fill="#47372a"/><rect x="6.4" y="5" width="4" height="0.6" fill="#7a5a48"/><rect x="7.4" y="7.4" width="2.2" height="0.5" fill="#a87868"/><path d="M1.2 17.6 L1.8 12.5 L6.4 9.6 L8.3 11 L10.4 9.4 L15.4 12 L17 17.6 Z" fill="#1c2438"/><path d="M6.6 9.8 L8.3 9 L10.2 9.6 L9.2 17.6 L7.4 17.6 Z" fill="#e8ecf0"/><path d="M7.8 10 L8.9 10 L9.4 17.6 L7.5 17.6 Z" fill="#5a9bd0"/></g></svg>
<svg class="a" style="left:116.3px;top:269.7px" width="17.6" height="17.3" viewBox="0 0 17.6 17.3"><defs><filter id="p8" x="-20%" y="-20%" width="140%" height="140%"><feGaussianBlur stdDeviation="0.7"/></filter></defs><g filter="url(#p8)"><rect x="-2" y="-2" width="22" height="22" fill="#8c8c7a"/><rect x="-2" y="-2" width="6" height="12" fill="#6e7468"/><ellipse cx="9" cy="7.5" rx="5.2" ry="7.2" fill="#d6c8a4"/><ellipse cx="9" cy="6.6" rx="2.6" ry="3.6" fill="#d2aa8c"/><rect x="7" y="5.8" width="4" height="0.6" fill="#8a6a50"/><rect x="7.8" y="8.4" width="2.4" height="0.6" fill="#c08878"/><ellipse cx="5.2" cy="12" rx="1.8" ry="3.6" fill="#cdbf9c"/><ellipse cx="12.8" cy="12" rx="1.8" ry="3.6" fill="#cdbf9c"/><path d="M-1 18 L0.5 14.6 L5 13.4 L9 16.5 L13 13.4 L17 14.4 L19 18 Z" fill="#161616"/><path d="M6 13.4 L9 12 L12 13.4 L9 16.8 Z" fill="#e8e4dc"/></g></svg>
<svg class="a" style="left:116.3px;top:292.0px" width="17.6" height="6.8" viewBox="0 0 17.6 6.8"><defs><filter id="p9" x="-20%" y="-20%" width="140%" height="140%"><feGaussianBlur stdDeviation="0.45"/></filter></defs><g filter="url(#p9)"><rect x="-2" y="-2" width="22" height="22" fill="#ffffff"/><circle cx="14.59" cy="15.43" r="0.9" fill="#e2deaa"/><circle cx="3.01" cy="15.43" r="0.9" fill="#e2deaa"/><circle cx="1.9" cy="14.34" r="0.9" fill="#e2deaa"/><circle cx="15.7" cy="14.34" r="0.9" fill="#e2deaa"/><circle cx="1.9" cy="2.96" r="0.9" fill="#e2deaa"/><circle cx="15.7" cy="2.96" r="0.9" fill="#e2deaa"/><circle cx="14.59" cy="1.87" r="0.9" fill="#e2deaa"/><circle cx="3.01" cy="1.87" r="0.9" fill="#e2deaa"/><circle cx="17.56" cy="1.89" r="0.96" fill="#e2deaa"/><circle cx="0.04" cy="1.89" r="0.96" fill="#e2deaa"/><circle cx="15.68" cy="17.27" r="0.96" fill="#e2deaa"/><circle cx="15.68" cy="0.03" r="0.96" fill="#e2deaa"/><circle cx="1.92" cy="17.27" r="0.96" fill="#e2deaa"/><circle cx="1.92" cy="0.03" r="0.96" fill="#e2deaa"/><circle cx="17.56" cy="15.41" r="0.96" fill="#e2deaa"/><circle cx="0.04" cy="15.41" r="0.96" fill="#e2deaa"/><circle cx="13.13" cy="8.38" r="0.97" fill="#e2deaa"/><circle cx="8.53" cy="4.39" r="0.97" fill="#e2deaa"/><circle cx="8.53" cy="12.91" r="0.97" fill="#e2deaa"/><circle cx="4.47" cy="8.38" r="0.97" fill="#e2deaa"/><circle cx="13.13" cy="8.92" r="0.97" fill="#e2deaa"/><circle cx="4.47" cy="8.92" r="0.97" fill="#e2deaa"/><circle cx="9.07" cy="4.39" r="0.97" fill="#e2deaa"/><circle cx="9.07" cy="12.91" r="0.97" fill="#e2deaa"/><circle cx="0.42" cy="14.58" r="0.56" fill="#e2deaa"/><circle cx="17.18" cy="2.72" r="0.56" fill="#e2deaa"/><circle cx="2.76" cy="0.41" r="0.56" fill="#e2deaa"/><circle cx="2.76" cy="16.89" r="0.56" fill="#e2deaa"/><circle cx="14.84" cy="16.89" r="0.56" fill="#e2deaa"/><circle cx="0.42" cy="2.72" r="0.56" fill="#e2deaa"/><circle cx="14.84" cy="0.41" r="0.56" fill="#e2deaa"/><circle cx="17.18" cy="14.58" r="0.56" fill="#e2deaa"/><circle cx="4.44" cy="10.9" r="0.77" fill="#e2deaa"/><circle cx="11.09" cy="4.36" r="0.77" fill="#e2deaa"/><circle cx="11.09" cy="12.94" r="0.77" fill="#e2deaa"/><circle cx="13.16" cy="6.4" r="0.77" fill="#e2deaa"/><circle cx="4.44" cy="6.4" r="0.77" fill="#e2deaa"/><circle cx="6.51" cy="12.94" r="0.77" fill="#e2deaa"/><circle cx="6.51" cy="4.36" r="0.77" fill="#e2deaa"/><circle cx="13.16" cy="10.9" r="0.77" fill="#e2deaa"/><circle cx="8.92" cy="3.4" r="0.61" fill="#e2deaa"/><circle cx="8.68" cy="3.4" r="0.61" fill="#e2deaa"/><circle cx="8.92" cy="13.9" r="0.61" fill="#e2deaa"/><circle cx="3.46" cy="8.53" r="0.61" fill="#e2deaa"/><circle cx="8.68" cy="13.9" r="0.61" fill="#e2deaa"/><circle cx="3.46" cy="8.77" r="0.61" fill="#e2deaa"/><circle cx="14.14" cy="8.53" r="0.61" fill="#e2deaa"/><circle cx="14.14" cy="8.77" r="0.61" fill="#e2deaa"/><circle cx="6.2" cy="17.03" r="0.88" fill="#e2deaa"/><circle cx="11.4" cy="17.03" r="0.88" fill="#e2deaa"/><circle cx="0.28" cy="11.2" r="0.88" fill="#e2deaa"/><circle cx="6.2" cy="0.27" r="0.88" fill="#e2deaa"/><circle cx="11.4" cy="0.27" r="0.88" fill="#e2deaa"/><circle cx="17.32" cy="11.2" r="0.88" fill="#e2deaa"/><circle cx="0.28" cy="6.1" r="0.88" fill="#e2deaa"/><circle cx="17.32" cy="6.1" r="0.88" fill="#e2deaa"/><circle cx="1.39" cy="10.11" r="0.57" fill="#e2deaa"/><circle cx="1.39" cy="7.19" r="0.57" fill="#e2deaa"/><circle cx="16.21" cy="10.11" r="0.57" fill="#e2deaa"/><circle cx="7.32" cy="15.94" r="0.57" fill="#e2deaa"/><circle cx="7.32" cy="1.36" r="0.57" fill="#e2deaa"/><circle cx="16.21" cy="7.19" r="0.57" fill="#e2deaa"/><circle cx="10.28" cy="15.94" r="0.57" fill="#e2deaa"/><circle cx="10.28" cy="1.36" r="0.57" fill="#e2deaa"/><circle cx="3.06" cy="9.81" r="0.5" fill="#e2deaa"/><circle cx="14.54" cy="7.49" r="0.5" fill="#e2deaa"/><circle cx="14.54" cy="9.81" r="0.5" fill="#e2deaa"/><circle cx="3.06" cy="7.49" r="0.5" fill="#e2deaa"/><circle cx="7.62" cy="3.01" r="0.5" fill="#e2deaa"/><circle cx="7.62" cy="14.29" r="0.5" fill="#e2deaa"/><circle cx="9.98" cy="3.01" r="0.5" fill="#e2deaa"/><circle cx="9.98" cy="14.29" r="0.5" fill="#e2deaa"/></g></svg>
<svg class="a" style="left:305px;top:108px" width="345" height="190.8" viewBox="0 0 345 190.8"><rect x="0" y="0" width="345" height="190.8" fill="#fff"/><rect x="0.60" y="1.55" width="54.45" height="21.30" fill="#ff2a00"/><rect x="53.55" y="1.55" width="54.45" height="21.30" fill="#ffa300"/><rect x="106.50" y="1.55" width="54.45" height="21.30" fill="#ff0000"/><rect x="159.45" y="1.55" width="54.45" height="21.30" fill="#ff0000"/><rect x="212.40" y="1.55" width="54.45" height="21.30" fill="#ffcc00"/><rect x="265.35" y="1.55" width="54.45" height="21.30" fill="#ffcc00"/><rect x="318.30" y="1.55" width="52.95" height="21.30" fill="#dcc90f"/><rect x="0.60" y="23.85" width="54.45" height="21.30" fill="#dcc90f"/><rect x="53.55" y="23.85" width="54.45" height="21.30" fill="#dcc90f"/><rect x="106.50" y="23.85" width="54.45" height="21.30" fill="#a6dcae"/><rect x="159.45" y="23.85" width="54.45" height="21.30" fill="#ffffff"/><rect x="212.40" y="23.85" width="54.45" height="21.30" fill="#ffffff"/><rect x="265.35" y="23.85" width="54.45" height="21.30" fill="#ffffff"/><rect x="318.30" y="23.85" width="52.95" height="21.30" fill="#ffffff"/><rect x="0.60" y="46.15" width="54.45" height="21.30" fill="#ffa300"/><rect x="53.55" y="46.15" width="54.45" height="21.30" fill="#ffa300"/><rect x="106.50" y="46.15" width="54.45" height="21.30" fill="#ffa300"/><rect x="159.45" y="46.15" width="54.45" height="21.30" fill="#ffa300"/><rect x="212.40" y="46.15" width="54.45" height="21.30" fill="#ffa300"/><rect x="265.35" y="46.15" width="54.45" height="21.30" fill="#ffa300"/><rect x="318.30" y="46.15" width="52.95" height="21.30" fill="#ffa300"/><rect x="0.60" y="68.45" width="54.45" height="21.30" fill="#6cbd2c"/><rect x="53.55" y="68.45" width="54.45" height="21.30" fill="#a6dcae"/><rect x="106.50" y="68.45" width="54.45" height="21.30" fill="#e4f4e6"/><rect x="159.45" y="68.45" width="54.45" height="21.30" fill="#e4f4e6"/><rect x="212.40" y="68.45" width="54.45" height="21.30" fill="#e4f4e6"/><rect x="265.35" y="68.45" width="54.45" height="21.30" fill="#eef8ef"/><rect x="318.30" y="68.45" width="52.95" height="21.30" fill="#f0f6f8"/><rect x="0.60" y="90.75" width="54.45" height="21.30" fill="#5fc36e"/><rect x="53.55" y="90.75" width="54.45" height="21.30" fill="#ffffff"/><rect x="106.50" y="90.75" width="54.45" height="21.30" fill="#ffffff"/><rect x="159.45" y="90.75" width="54.45" height="21.30" fill="#ffffff"/><rect x="212.40" y="90.75" width="54.45" height="21.30" fill="#ffffff"/><rect x="265.35" y="90.75" width="54.45" height="21.30" fill="#ffffff"/><rect x="318.30" y="90.75" width="52.95" height="21.30" fill="#ffffff"/><rect x="0.60" y="113.05" width="54.45" height="21.30" fill="#2fae47"/><rect x="53.55" y="113.05" width="54.45" height="21.30" fill="#bfe6c3"/><rect x="106.50" y="113.05" width="54.45" height="21.30" fill="#bfe6c3"/><rect x="159.45" y="113.05" width="54.45" height="21.30" fill="#bfe6c3"/><rect x="212.40" y="113.05" width="54.45" height="21.30" fill="#bfe6c3"/><rect x="265.35" y="113.05" width="54.45" height="21.30" fill="#bfe6c3"/><rect x="318.30" y="113.05" width="52.95" height="21.30" fill="#bfe6c3"/><rect x="0.60" y="135.35" width="54.45" height="21.30" fill="#ffa300"/><rect x="53.55" y="135.35" width="54.45" height="21.30" fill="#ffa300"/><rect x="106.50" y="135.35" width="54.45" height="21.30" fill="#ffa300"/><rect x="159.45" y="135.35" width="54.45" height="21.30" fill="#ffa300"/><rect x="212.40" y="135.35" width="54.45" height="21.30" fill="#ffa300"/><rect x="265.35" y="135.35" width="54.45" height="21.30" fill="#3cb255"/><rect x="318.30" y="135.35" width="52.95" height="21.30" fill="#5fc36e"/><rect x="0.60" y="157.65" width="54.45" height="21.30" fill="#ff0000"/><rect x="53.55" y="157.65" width="54.45" height="21.30" fill="#ff0000"/><rect x="106.50" y="157.65" width="54.45" height="21.30" fill="#ff0000"/><rect x="159.45" y="157.65" width="54.45" height="21.30" fill="#ff5a00"/><rect x="212.40" y="157.65" width="54.45" height="21.30" fill="#f6fbf6"/><rect x="265.35" y="157.65" width="54.45" height="21.30" fill="#ffffff"/><rect x="318.30" y="157.65" width="52.95" height="21.30" fill="#ffffff"/><rect x="0.60" y="179.95" width="54.45" height="11.20" fill="#ff0000"/><rect x="53.55" y="179.95" width="54.45" height="11.20" fill="#ff0000"/><rect x="106.50" y="179.95" width="54.45" height="11.20" fill="#ff0000"/><rect x="159.45" y="179.95" width="54.45" height="11.20" fill="#ff0000"/><rect x="212.40" y="179.95" width="54.45" height="11.20" fill="#ff0000"/><rect x="265.35" y="179.95" width="54.45" height="11.20" fill="#ff0000"/><rect x="318.30" y="179.95" width="52.95" height="11.20" fill="#5fc36e"/></svg>
<div class="t" style="left:308.8px;top:113.00px;font-size:6.8px;color:#fff;transform:scaleX(0.847);transform-origin:0 0;-webkit-text-stroke:0.1px #fff;">115%</div>
<div class="t" style="left:361.8px;top:113.00px;font-size:6.8px;color:rgba(30,30,20,0.8);transform:scaleX(0.897);transform-origin:0 0;-webkit-text-stroke:0.1px rgba(30,30,20,0.8);">100%</div>
<div class="t" style="left:414.7px;top:113.00px;font-size:6.8px;color:#fff;transform:scaleX(0.897);transform-origin:0 0;-webkit-text-stroke:0.1px #fff;">125%</div>
<div class="t" style="left:467.7px;top:113.00px;font-size:6.8px;color:#fff;transform:scaleX(0.897);transform-origin:0 0;-webkit-text-stroke:0.1px #fff;">124%</div>
<div class="t" style="left:520.6px;top:113.00px;font-size:6.8px;color:rgba(30,30,20,0.8);letter-spacing:-0.203px;-webkit-text-stroke:0.1px rgba(30,30,20,0.8);">95%</div>
<div class="t" style="left:573.6px;top:113.00px;font-size:6.8px;color:rgba(30,30,20,0.8);letter-spacing:-0.203px;-webkit-text-stroke:0.1px rgba(30,30,20,0.8);">95%</div>
<div class="t" style="left:626.5px;top:113.00px;font-size:6.8px;color:rgba(30,30,20,0.8);letter-spacing:-0.203px;-webkit-text-stroke:0.1px rgba(30,30,20,0.8);">93%</div>
<div class="t" style="left:308.8px;top:136.00px;font-size:6.8px;color:rgba(30,30,20,0.8);letter-spacing:-0.203px;-webkit-text-stroke:0.1px rgba(30,30,20,0.8);">93%</div>
<div class="t" style="left:361.8px;top:136.00px;font-size:6.8px;color:rgba(30,30,20,0.8);letter-spacing:-0.203px;-webkit-text-stroke:0.1px rgba(30,30,20,0.8);">93%</div>
<div class="t" style="left:414.7px;top:136.00px;font-size:6.8px;color:rgba(30,30,20,0.8);letter-spacing:-0.203px;-webkit-text-stroke:0.1px rgba(30,30,20,0.8);">32%</div>
<div class="t" style="left:467.7px;top:136.00px;font-size:6.8px;color:rgba(30,30,20,0.8);transform:scaleX(0.926);transform-origin:0 0;-webkit-text-stroke:0.1px rgba(30,30,20,0.8);">0%</div>
<div class="t" style="left:520.6px;top:136.00px;font-size:6.8px;color:rgba(30,30,20,0.8);transform:scaleX(0.926);transform-origin:0 0;-webkit-text-stroke:0.1px rgba(30,30,20,0.8);">0%</div>
<div class="t" style="left:573.6px;top:136.00px;font-size:6.8px;color:rgba(30,30,20,0.8);transform:scaleX(0.926);transform-origin:0 0;-webkit-text-stroke:0.1px rgba(30,30,20,0.8);">0%</div>
<div class="t" style="left:626.5px;top:136.00px;font-size:6.8px;color:rgba(30,30,20,0.8);transform:scaleX(0.926);transform-origin:0 0;-webkit-text-stroke:0.1px rgba(30,30,20,0.8);">0%</div>
<div class="t" style="left:308.8px;top:158.00px;font-size:6.8px;color:rgba(30,30,20,0.8);transform:scaleX(0.897);transform-origin:0 0;-webkit-text-stroke:0.1px rgba(30,30,20,0.8);">100%</div>
<div class="t" style="left:361.8px;top:158.00px;font-size:6.8px;color:rgba(30,30,20,0.8);transform:scaleX(0.897);transform-origin:0 0;-webkit-text-stroke:0.1px rgba(30,30,20,0.8);">100%</div>
<div class="t" style="left:414.7px;top:158.00px;font-size:6.8px;color:rgba(30,30,20,0.8);transform:scaleX(0.897);transform-origin:0 0;-webkit-text-stroke:0.1px rgba(30,30,20,0.8);">100%</div>
<div class="t" style="left:467.7px;top:158.00px;font-size:6.8px;color:rgba(30,30,20,0.8);transform:scaleX(0.897);transform-origin:0 0;-webkit-text-stroke:0.1px rgba(30,30,20,0.8);">100%</div>
<div class="t" style="left:520.6px;top:158.00px;font-size:6.8px;color:rgba(30,30,20,0.8);transform:scaleX(0.897);transform-origin:0 0;-webkit-text-stroke:0.1px rgba(30,30,20,0.8);">100%</div>
<div class="t" style="left:573.6px;top:158.00px;font-size:6.8px;color:rgba(30,30,20,0.8);transform:scaleX(0.897);transform-origin:0 0;-webkit-text-stroke:0.1px rgba(30,30,20,0.8);">100%</div>
<div class="t" style="left:626.5px;top:158.00px;font-size:6.8px;color:rgba(30,30,20,0.8);transform:scaleX(0.897);transform-origin:0 0;-webkit-text-stroke:0.1px rgba(30,30,20,0.8);">100%</div>
<div class="t" style="left:308.8px;top:180.00px;font-size:6.8px;color:rgba(30,30,20,0.8);letter-spacing:-0.203px;-webkit-text-stroke:0.1px rgba(30,30,20,0.8);">85%</div>
<div class="t" style="left:361.8px;top:180.00px;font-size:6.8px;color:rgba(30,30,20,0.8);letter-spacing:-0.203px;-webkit-text-stroke:0.1px rgba(30,30,20,0.8);">33%</div>
<div class="t" style="left:414.7px;top:180.00px;font-size:6.8px;color:rgba(30,30,20,0.8);transform:scaleX(0.860);transform-origin:0 0;-webkit-text-stroke:0.1px rgba(30,30,20,0.8);">10%</div>
<div class="t" style="left:467.7px;top:180.00px;font-size:6.8px;color:rgba(30,30,20,0.8);transform:scaleX(0.860);transform-origin:0 0;-webkit-text-stroke:0.1px rgba(30,30,20,0.8);">10%</div>
<div class="t" style="left:520.6px;top:180.00px;font-size:6.8px;color:rgba(30,30,20,0.8);transform:scaleX(0.860);transform-origin:0 0;-webkit-text-stroke:0.1px rgba(30,30,20,0.8);">10%</div>
<div class="t" style="left:573.6px;top:180.00px;font-size:6.8px;color:rgba(30,30,20,0.8);transform:scaleX(0.926);transform-origin:0 0;-webkit-text-stroke:0.1px rgba(30,30,20,0.8);">7%</div>
<div class="t" style="left:626.5px;top:180.00px;font-size:6.8px;color:rgba(30,30,20,0.8);transform:scaleX(0.926);transform-origin:0 0;-webkit-text-stroke:0.1px rgba(30,30,20,0.8);">0%</div>
<div class="t" style="left:308.8px;top:203.00px;font-size:6.8px;color:rgba(30,30,20,0.8);letter-spacing:-0.203px;-webkit-text-stroke:0.1px rgba(30,30,20,0.8);">60%</div>
<div class="t" style="left:520.6px;top:203.00px;font-size:6.8px;color:rgba(30,30,20,0.8);transform:scaleX(0.926);transform-origin:0 0;-webkit-text-stroke:0.1px rgba(30,30,20,0.8);">0%</div>
<div class="t" style="left:573.6px;top:203.00px;font-size:6.8px;color:rgba(30,30,20,0.8);transform:scaleX(0.926);transform-origin:0 0;-webkit-text-stroke:0.1px rgba(30,30,20,0.8);">0%</div>
<div class="t" style="left:626.5px;top:203.00px;font-size:6.8px;color:rgba(30,30,20,0.8);transform:scaleX(0.926);transform-origin:0 0;-webkit-text-stroke:0.1px rgba(30,30,20,0.8);">0%</div>
<div class="t" style="left:308.8px;top:225.00px;font-size:6.8px;color:rgba(30,30,20,0.8);letter-spacing:-0.203px;-webkit-text-stroke:0.1px rgba(30,30,20,0.8);">80%</div>
<div class="t" style="left:520.6px;top:225.00px;font-size:6.8px;color:rgba(30,30,20,0.8);letter-spacing:-0.203px;-webkit-text-stroke:0.1px rgba(30,30,20,0.8);">25%</div>
<div class="t" style="left:573.6px;top:225.00px;font-size:6.8px;color:rgba(30,30,20,0.8);letter-spacing:-0.203px;-webkit-text-stroke:0.1px rgba(30,30,20,0.8);">25%</div>
<div class="t" style="left:626.5px;top:225.00px;font-size:6.8px;color:rgba(30,30,20,0.8);letter-spacing:-0.203px;-webkit-text-stroke:0.1px rgba(30,30,20,0.8);">25%</div>
<div class="t" style="left:308.8px;top:247.00px;font-size:6.8px;color:rgba(30,30,20,0.8);transform:scaleX(0.897);transform-origin:0 0;-webkit-text-stroke:0.1px rgba(30,30,20,0.8);">100%</div>
<div class="t" style="left:520.6px;top:247.00px;font-size:6.8px;color:rgba(30,30,20,0.8);transform:scaleX(0.897);transform-origin:0 0;-webkit-text-stroke:0.1px rgba(30,30,20,0.8);">100%</div>
<div class="t" style="left:573.6px;top:247.00px;font-size:6.8px;color:rgba(30,30,20,0.8);letter-spacing:-0.203px;-webkit-text-stroke:0.1px rgba(30,30,20,0.8);">72%</div>
<div class="t" style="left:626.5px;top:247.00px;font-size:6.8px;color:rgba(30,30,20,0.8);letter-spacing:-0.203px;-webkit-text-stroke:0.1px rgba(30,30,20,0.8);">60%</div>
<div class="t" style="left:308.8px;top:270.00px;font-size:6.8px;color:#fff;transform:scaleX(0.822);transform-origin:0 0;-webkit-text-stroke:0.1px #fff;">131%</div>
<div class="t" style="left:520.6px;top:270.00px;font-size:6.8px;color:rgba(30,30,20,0.8);transform:scaleX(0.926);transform-origin:0 0;-webkit-text-stroke:0.1px rgba(30,30,20,0.8);">0%</div>
<div class="t" style="left:573.6px;top:270.00px;font-size:6.8px;color:rgba(30,30,20,0.8);transform:scaleX(0.926);transform-origin:0 0;-webkit-text-stroke:0.1px rgba(30,30,20,0.8);">0%</div>
<div class="t" style="left:626.5px;top:270.00px;font-size:6.8px;color:rgba(30,30,20,0.8);transform:scaleX(0.926);transform-origin:0 0;-webkit-text-stroke:0.1px rgba(30,30,20,0.8);">0%</div>
<div class="t" style="left:308.8px;top:292.00px;font-size:6.8px;color:#fff;transform:scaleX(0.897);transform-origin:0 0;-webkit-text-stroke:0.1px #fff;">145%</div>
<div class="t" style="left:361.8px;top:292.00px;font-size:6.8px;color:#fff;transform:scaleX(0.897);transform-origin:0 0;-webkit-text-stroke:0.1px #fff;">145%</div>
<div class="t" style="left:414.7px;top:292.00px;font-size:6.8px;color:#fff;transform:scaleX(0.822);transform-origin:0 0;-webkit-text-stroke:0.1px #fff;">131%</div>
<div class="t" style="left:467.7px;top:292.00px;font-size:6.8px;color:#fff;transform:scaleX(0.897);transform-origin:0 0;-webkit-text-stroke:0.1px #fff;">125%</div>
<div class="t" style="left:520.6px;top:292.00px;font-size:6.8px;color:#fff;transform:scaleX(0.897);transform-origin:0 0;-webkit-text-stroke:0.1px #fff;">125%</div>
<div class="t" style="left:573.6px;top:292.00px;font-size:6.8px;color:#fff;transform:scaleX(0.897);transform-origin:0 0;-webkit-text-stroke:0.1px #fff;">125%</div>
<div class="t" style="left:626.5px;top:292.00px;font-size:6.8px;color:rgba(30,30,20,0.8);letter-spacing:-0.203px;-webkit-text-stroke:0.1px rgba(30,30,20,0.8);">64%</div>
<div class="a" style="left:303.30px;top:75.80px;width:2.30px;height:232.50px;background:#d6d6d6;"></div>
<div class="a" style="left:113.20px;top:298.80px;width:190.20px;height:9.40px;background:#f7f7f7;border-top:0.6px solid #e6e6e6;border-bottom:0.6px solid #dcdcdc;box-sizing:border-box"></div>
<div class="a" style="left:305.60px;top:298.80px;width:345.00px;height:9.40px;background:#fafafa;border-bottom:0.6px solid #e0e0e0;box-sizing:border-box"></div>
<svg class="a" style="left:305px;top:299px" width="345" height="10" viewBox="0 0 345 10"><rect x="2.8" y="1.9" width="294.4" height="6" rx="3" fill="#c0c0c0"/></svg>
<div class="a" style="left:113.20px;top:308.20px;width:537.00px;height:5.00px;background:#fff;"></div>
<div class="a" style="left:428.30px;top:308.40px;width:26.50px;height:4.80px;background:#dfe2e6;"></div>
<svg class="a" style="left:438px;top:309px" width="7" height="5" viewBox="0 0 7 5"><path d="M0.8 1 H6 L3.4 3.9 Z" fill="#7a7d84"/></svg>
<div class="a" style="left:340.8px;top:196.7px;width:183.7px;height:80px;background:#ededed;border:0.6px solid #d8d8d8;box-sizing:border-box;box-shadow:0 0.5px 2px rgba(0,0,0,0.25);border-radius:1px"></div>
<div class="t" style="left:344.8px;top:199.00px;font-size:6.5px;color:#34495e;font-weight:bold;transform:scaleX(0.831);transform-origin:0 0;">Time Period:</div>
<div class="t" style="left:397.4px;top:199.00px;font-size:6.5px;color:#5b7286;transform:scaleX(0.849);transform-origin:0 0;">Apr 1-30, 2021</div>
<div class="t" style="left:344.8px;top:209.00px;font-size:6.5px;color:#34495e;font-weight:bold;transform:scaleX(0.808);transform-origin:0 0;">Resource:</div>
<div class="t" style="left:397.4px;top:209.00px;font-size:6.5px;color:#5b7286;transform:scaleX(0.865);transform-origin:0 0;">Huskic, Izzy</div>
<div class="t" style="left:344.8px;top:218.00px;font-size:6.5px;color:#34495e;font-weight:bold;transform:scaleX(0.807);transform-origin:0 0;">Utilization:</div>
<div class="t" style="left:397.4px;top:218.00px;font-size:6.5px;color:#5b7286;transform:scaleX(0.830);transform-origin:0 0;">85%</div>
<div class="t" style="left:344.8px;top:228.00px;font-size:6.5px;color:#34495e;font-weight:bold;transform:scaleX(0.825);transform-origin:0 0;">Available Capacity:</div>
<div class="t" style="left:397.4px;top:228.00px;font-size:6.5px;color:#5b7286;transform:scaleX(0.912);transform-origin:0 0;">25.60 Hours</div>
<div class="t" style="left:344.8px;top:237.00px;font-size:6.5px;color:#34495e;font-weight:bold;transform:scaleX(0.801);transform-origin:0 0;">Events:</div>
<div class="t" style="left:397.4px;top:237.00px;font-size:6.5px;color:#5b7286;transform:scaleX(0.869);transform-origin:0 0;">None</div>
<div class="t" style="left:344.8px;top:246.00px;font-size:6.5px;color:#34495e;font-weight:bold;transform:scaleX(0.817);transform-origin:0 0;">Staffed Projects:</div>
<div class="t" style="left:397.4px;top:246.00px;font-size:6.5px;color:#5b7286;transform:scaleX(0.881);transform-origin:0 0;">0.1, Project Manager, Capital Investment Project</div>
<div class="t" style="left:397.4px;top:255.00px;font-size:6.5px;color:#5b7286;transform:scaleX(0.895);transform-origin:0 0;">0.3, Project Manager, Hyperloop</div>
<div class="t" style="left:397.4px;top:264.00px;font-size:6.5px;color:#5b7286;transform:scaleX(0.873);transform-origin:0 0;">0.45, Sponsor, GDPR Data Privacy</div>
<div class="a" style="left:113.20px;top:313.10px;width:537.00px;height:21.30px;background:#f3f3f3;border-top:0.7px solid #dcdcdc;border-bottom:0.6px solid #dcdcdc;box-sizing:border-box"></div>
<div class="t" style="left:116.6px;top:318.00px;font-size:8.5px;color:#333;letter-spacing:-0.009px;-webkit-text-stroke:0.32px #333;">Allocations: Davenport, Mary</div>
<div class="a" style="left:119px;top:337.4px;width:43.6px;height:15.2px;border:0.7px solid #dadada;border-radius:1.5px;box-sizing:border-box;background:#fff"></div>
<div class="t" style="left:125.6px;top:341.00px;font-size:6.5px;color:#666;letter-spacing:-0.074px;">Actions</div>
<div class="a" style="left:151.80px;top:344.30px;width:0;height:0;border-left:2.50px solid transparent;border-right:2.50px solid transparent;border-top:2.90px solid #5a5a5a"></div>
<div class="t" style="left:555.0px;top:339.00px;font-size:6.8px;color:#222;letter-spacing:-0.065px;-webkit-text-stroke:0.2px #222;">Interval:</div>
<div class="a" style="left:582.2px;top:337.8px;width:75px;height:15.6px;border:0.7px solid #e0e0e0;box-sizing:border-box;background:#fff"></div>
<div class="t" style="left:584.4px;top:341.00px;font-size:6.7px;color:#444;letter-spacing:0.091px;">Monthly</div>
<div class="a" style="left:113.20px;top:356.50px;width:537.00px;height:18.80px;background:#f6f6f6;border-top:0.7px solid #d6d6d6;border-bottom:0.7px solid #d2d2d2;box-sizing:border-box"></div>
<div class="t" style="left:117.4px;top:361.00px;font-size:6.8px;color:#222;letter-spacing:-0.063px;-webkit-text-stroke:0.14px #222;">Resource</div>
<div class="t" style="left:231.0px;top:361.00px;font-size:6.8px;color:#222;letter-spacing:-0.175px;-webkit-text-stroke:0.14px #222;">Role</div>
<div class="t" style="left:344.5px;top:361.00px;font-size:6.8px;color:#222;letter-spacing:0.040px;-webkit-text-stroke:0.14px #222;">Work</div>
<div class="t" style="left:476.9px;top:361.00px;font-size:6.8px;color:#222;letter-spacing:-0.011px;-webkit-text-stroke:0.14px #222;">Start Date</div>
<div class="t" style="left:534.0px;top:361.00px;font-size:6.8px;color:#222;letter-spacing:-0.044px;-webkit-text-stroke:0.14px #222;">End Date</div>
<div class="t" style="left:590.7px;top:361.00px;font-size:6.8px;color:#222;letter-spacing:-0.123px;-webkit-text-stroke:0.14px #222;">FTE/Points</div>
<div class="t" style="left:639.0px;top:361.00px;font-size:6.8px;color:#222;letter-spacing:-0.176px;-webkit-text-stroke:0.14px #222;">Apr</div>
<div class="a" style="left:113.20px;top:376.00px;width:537.00px;height:18.00px;background:#c9d9e6;border-bottom:0.6px solid #e2e2e2;box-sizing:border-box"></div>
<svg class="a" style="left:116.8px;top:381.2px" width="4.3" height="5.5" viewBox="0 0 9 10"><circle cx="4.5" cy="2.6" r="2.5" fill="#2b2b2b"/><path d="M0 10 C0 6 2 4.8 4.5 4.8 C7 4.8 9 6 9 10 Z" fill="#2b2b2b"/></svg>
<div class="t" style="left:124.6px;top:380.00px;font-size:7px;color:#444;letter-spacing:-0.049px;">Davenport, Mary</div>
<div class="t" style="left:231.0px;top:380.00px;font-size:7px;color:#444;letter-spacing:-0.121px;">Architect</div>
<svg class="a" style="left:343.8px;top:381.3px" width="7.2" height="5.8" viewBox="0 0 11 10"><path d="M2.8 8.2 C1.3 8.2 0.6 7.2 0.6 6.2 C0.6 5.2 1.4 4.4 2.3 4.3 C2.4 2.6 3.7 1.2 5.5 1.2 C7.3 1.2 8.6 2.6 8.7 4.3 C9.6 4.4 10.4 5.2 10.4 6.2 C10.4 7.2 9.7 8.2 8.2 8.2" fill="none" stroke="#3a3a3a" stroke-width="1.2"/><path d="M5.5 9.8 V4.8 M3.4 6.6 L5.5 4.4 L7.6 6.6" stroke="#3a3a3a" stroke-width="1.35" fill="none"/></svg>
<div class="t" style="left:352.1px;top:380.00px;font-size:7px;color:#444;letter-spacing:-0.029px;">Client Implementation Project</div>
<div class="t" style="left:476.9px;top:380.00px;font-size:7px;color:#444;transform:scaleX(0.920);transform-origin:0 0;">1/14/2021</div>
<div class="t" style="left:534.0px;top:380.00px;font-size:7px;color:#444;transform:scaleX(0.920);transform-origin:0 0;">7/29/2021</div>
<div class="t" style="left:590.7px;top:380.00px;font-size:7px;color:#444;letter-spacing:0.069px;">0.30</div>
<div class="t" style="left:639.0px;top:380.00px;font-size:7px;color:#444;letter-spacing:0.069px;">0.30</div>
<div class="a" style="left:113.20px;top:394.00px;width:537.00px;height:17.60px;background:#f8f8f8;border-bottom:0.6px solid #e2e2e2;box-sizing:border-box"></div>
<svg class="a" style="left:116.8px;top:398.9px" width="4.3" height="5.5" viewBox="0 0 9 10"><circle cx="4.5" cy="2.6" r="2.5" fill="#2b2b2b"/><path d="M0 10 C0 6 2 4.8 4.5 4.8 C7 4.8 9 6 9 10 Z" fill="#2b2b2b"/></svg>
<div class="t" style="left:124.6px;top:397.00px;font-size:7px;color:#444;letter-spacing:-0.049px;">Davenport, Mary</div>
<div class="t" style="left:231.0px;top:397.00px;font-size:7px;color:#444;letter-spacing:-0.121px;">Architect</div>
<svg class="a" style="left:343.8px;top:399.0px" width="7.2" height="5.8" viewBox="0 0 11 10"><path d="M2.8 8.2 C1.3 8.2 0.6 7.2 0.6 6.2 C0.6 5.2 1.4 4.4 2.3 4.3 C2.4 2.6 3.7 1.2 5.5 1.2 C7.3 1.2 8.6 2.6 8.7 4.3 C9.6 4.4 10.4 5.2 10.4 6.2 C10.4 7.2 9.7 8.2 8.2 8.2" fill="none" stroke="#3a3a3a" stroke-width="1.2"/><path d="M5.5 9.8 V4.8 M3.4 6.6 L5.5 4.4 L7.6 6.6" stroke="#3a3a3a" stroke-width="1.35" fill="none"/></svg>
<div class="t" style="left:352.1px;top:397.00px;font-size:7px;color:#444;transform:scaleX(0.864);transform-origin:0 0;">(EME) SERCEL</div>
<div class="t" style="left:476.9px;top:397.00px;font-size:7px;color:#444;transform:scaleX(0.920);transform-origin:0 0;">3/2/2021</div>
<div class="t" style="left:534.0px;top:397.00px;font-size:7px;color:#444;transform:scaleX(0.920);transform-origin:0 0;">10/28/2021</div>
<div class="t" style="left:590.7px;top:397.00px;font-size:7px;color:#444;letter-spacing:0.069px;">0.46</div>
<div class="t" style="left:639.0px;top:397.00px;font-size:7px;color:#444;letter-spacing:0.069px;">0.46</div>
<div class="a" style="left:113.20px;top:411.60px;width:537.00px;height:17.40px;background:#fff;border-bottom:0.6px solid #e2e2e2;box-sizing:border-box"></div>
<svg class="a" style="left:116.8px;top:416.4px" width="4.3" height="5.5" viewBox="0 0 9 10"><circle cx="4.5" cy="2.6" r="2.5" fill="#2b2b2b"/><path d="M0 10 C0 6 2 4.8 4.5 4.8 C7 4.8 9 6 9 10 Z" fill="#2b2b2b"/></svg>
<div class="t" style="left:124.6px;top:415.00px;font-size:7px;color:#444;letter-spacing:-0.049px;">Davenport, Mary</div>
<div class="t" style="left:231.0px;top:415.00px;font-size:7px;color:#444;letter-spacing:-0.121px;">Architect</div>
<svg class="a" style="left:344px;top:417.1px" width="6.6" height="4.8" viewBox="0 0 10 9"><rect x="0.2" y="0.2" width="9.6" height="8.6" fill="#3c3c3c"/><path d="M1.1 4 H8.9 M1.1 6.4 H8.9" stroke="#eee" stroke-width="1.3"/><path d="M3.7 3.2 V7.6 M6.4 3.2 V7.6" stroke="#3c3c3c" stroke-width="0.7"/></svg>
<div class="t" style="left:352.1px;top:415.00px;font-size:7px;color:#444;letter-spacing:-0.058px;">Website Migration</div>
<div class="t" style="left:476.9px;top:415.00px;font-size:7px;color:#444;transform:scaleX(0.920);transform-origin:0 0;">1/20/2021</div>
<div class="t" style="left:534.0px;top:415.00px;font-size:7px;color:#444;transform:scaleX(0.920);transform-origin:0 0;">7/12/2022</div>
<div class="t" style="left:590.7px;top:415.00px;font-size:7px;color:#444;letter-spacing:0.069px;">0.45</div>
<div class="t" style="left:639.0px;top:415.00px;font-size:7px;color:#444;letter-spacing:0.069px;">0.45</div>
<div class="a" style="left:227.40px;top:357.00px;width:0.70px;height:18.00px;background:#e0e5ea;"></div>
<div class="a" style="left:227.40px;top:376.00px;width:0.70px;height:53.00px;background:rgba(120,140,160,0.04);"></div>
<div class="a" style="left:341.20px;top:357.00px;width:0.70px;height:18.00px;background:#e0e5ea;"></div>
<div class="a" style="left:341.20px;top:376.00px;width:0.70px;height:53.00px;background:rgba(120,140,160,0.04);"></div>
<div class="a" style="left:474.00px;top:357.00px;width:0.70px;height:18.00px;background:#e0e5ea;"></div>
<div class="a" style="left:474.00px;top:376.00px;width:0.70px;height:53.00px;background:rgba(120,140,160,0.04);"></div>
<div class="a" style="left:530.30px;top:357.00px;width:0.70px;height:18.00px;background:#e0e5ea;"></div>
<div class="a" style="left:530.30px;top:376.00px;width:0.70px;height:53.00px;background:rgba(120,140,160,0.04);"></div>
<div class="a" style="left:587.50px;top:357.00px;width:0.70px;height:18.00px;background:#e0e5ea;"></div>
<div class="a" style="left:587.50px;top:376.00px;width:0.70px;height:53.00px;background:rgba(120,140,160,0.04);"></div>
<div class="a" style="left:634.20px;top:356.50px;width:2.40px;height:77.00px;background:#d2d2d2;"></div>
</div>
</body></html>
